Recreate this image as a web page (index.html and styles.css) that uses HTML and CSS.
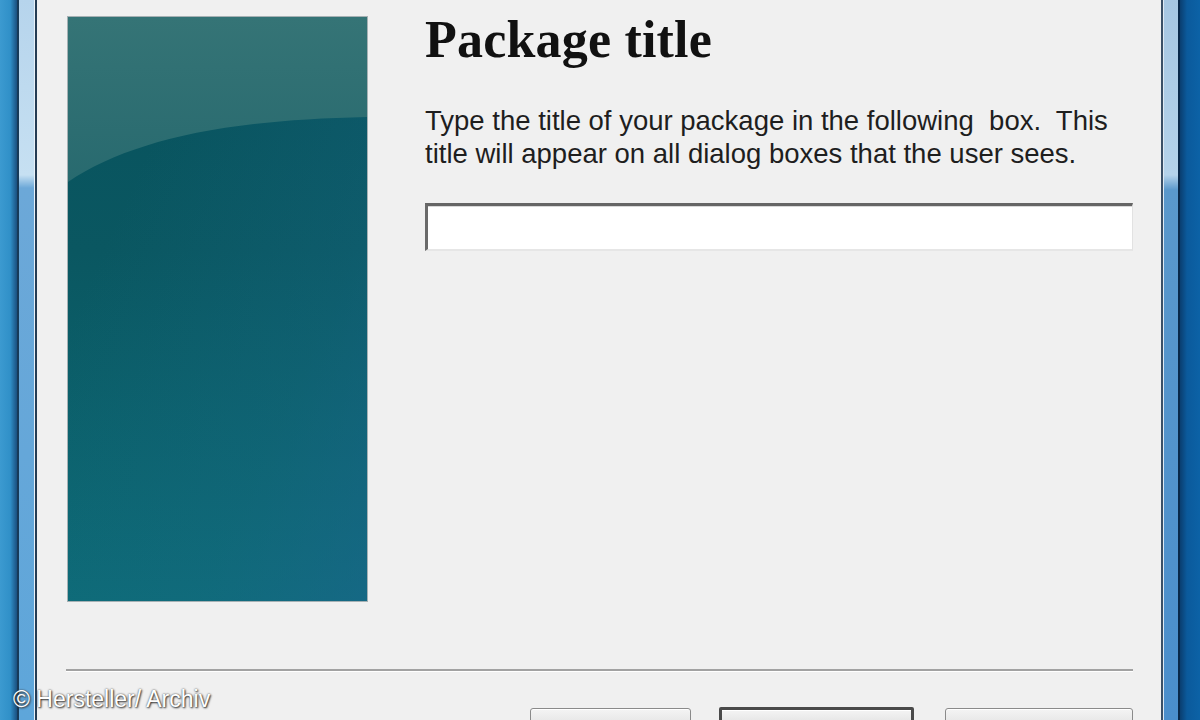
FILE: index.html
```html
<!DOCTYPE html>
<html lang="en">
<head>
<meta charset="utf-8">
<title>Package title</title>
<link rel="stylesheet" href="styles.css">
</head>
<body>
<div class="screen">
  <div class="frame-left">
    <div class="glass-outer-left"></div>
    <div class="glass-strip-left"></div>
  </div>
  <div class="dialog">
    <div class="main">
      <div class="banner">
        <svg class="banner-art" viewBox="0 0 299 584" preserveAspectRatio="none" aria-hidden="true">
          <defs>
            <linearGradient id="dark" x1="0" y1="0" x2="0" y2="1">
              <stop offset="0" stop-color="#08525d"/>
              <stop offset="0.4" stop-color="#0a5761"/>
              <stop offset="1" stop-color="#0d6b76"/>
            </linearGradient>
            <linearGradient id="blue" x1="0.2" y1="0.3" x2="1" y2="1">
              <stop offset="0" stop-color="#1a6a8c" stop-opacity="0"/>
              <stop offset="0.6" stop-color="#1a6a8c" stop-opacity="0.25"/>
              <stop offset="1" stop-color="#1c6690" stop-opacity="0.55"/>
            </linearGradient>
            <linearGradient id="light" x1="0" y1="0" x2="0" y2="1">
              <stop offset="0" stop-color="#357476"/>
              <stop offset="1" stop-color="#286a6f"/>
            </linearGradient>
          </defs>
          <rect width="299" height="584" fill="url(#dark)"/>
          <rect width="299" height="584" fill="url(#blue)"/>
          <path d="M0,0 H299 V100 C150,103 60,125 0,165 Z" fill="url(#light)"/>
        </svg>
      </div>
      <div class="content">
        <h1 class="title">Package title</h1>
        <p class="desc">Type the title of your package in the following&nbsp; box.&nbsp; This<br>title will appear on all dialog boxes that the user sees.</p>
        <div class="field"></div>
      </div>
    </div>
    <div class="sep"></div>
    <div class="buttons">
      <div class="btn btn-back"></div>
      <div class="btn btn-next"></div>
      <div class="btn btn-cancel"></div>
    </div>
  </div>
  <div class="frame-right">
    <div class="glass-strip-right"></div>
    <div class="glass-outer-right"></div>
  </div>
  <div class="watermark">© Hersteller/ Archiv</div>
</div>
</body>
</html>
```
FILE: styles.css
```css
html, body {
  margin: 0;
  padding: 0;
}
body {
  width: 1200px;
  height: 720px;
  overflow: hidden;
  background: #f0f0f0;
  font-family: "Liberation Sans", Arial, sans-serif;
}
.screen {
  position: relative;
  display: flex;
  width: 1200px;
  height: 720px;
  overflow: hidden;
}

/* window frame */
.frame-left {
  display: flex;
  width: 38px;
  flex: none;
}
.glass-outer-left {
  width: 17px;
  background: linear-gradient(90deg, #3c9ad0 0, #3090c8 60%, #1a5080 100%);
  border-right: 2px solid #173a58;
}
.glass-strip-left {
  width: 16px;
  background: linear-gradient(180deg, #b6d4ec 0, #c6e0f2 175px, #6ca8d8 188px, #5ea6da 100%);
  border-right: 2px solid #243c54;
  box-shadow: inset -1px 0 0 #e8f2fa;
}
.frame-right {
  display: flex;
  width: 39px;
  flex: none;
}
.glass-strip-right {
  width: 15px;
  border-left: 2px solid #3a5068;
  background: linear-gradient(180deg, #a6c6e2 0, #b4d2ea 175px, #5a98cc 190px, #4a8ecc 100%);
  box-shadow: inset 1px 0 0 #dfeaf4;
}
.glass-outer-right {
  width: 20px;
  border-left: 2px solid #08284a;
  background: linear-gradient(90deg, #0a3e70 0, #0b5a9c 35%, #0c62a6 100%);
}

/* dialog */
.dialog {
  flex: 1;
  background: #f0f0f0;
  padding: 17px 28px 0 30px;
  display: flex;
  flex-direction: column;
}
.main {
  display: flex;
  gap: 58px;
  height: 584px;
}
.banner {
  width: 299px;
  height: 584px;
  flex: none;
  box-shadow: 0 0 0 1px rgba(30, 60, 70, 0.35);
}
.banner-art {
  display: block;
  width: 100%;
  height: 100%;
}
.content {
  width: 708px;
}
.title {
  margin: -3px 0 0;
  font-family: "Liberation Serif", "Times New Roman", serif;
  font-weight: bold;
  font-size: 52px;
  line-height: 52px;
  letter-spacing: 0.2px;
  color: #111;
}
.desc {
  margin: 38px 0 0;
  font-size: 27.5px;
  line-height: 33px;
  color: #1e1e1e;
  white-space: nowrap;
}
.field {
  margin-top: 33px;
  height: 43px;
  background: #fff;
  border-top: 3px solid #656565;
  border-left: 3px solid #6a6a6a;
  border-right: 1px solid #e2e2e2;
  border-bottom: 2px solid #e6e6e6;
  box-shadow: inset 0 1px 0 #d8d8d8;
}
.sep {
  margin: 68px 0 0 -2px;
  height: 0;
  border-top: 2px solid #a2a2a2;
  border-bottom: 1px solid #ffffff;
}
.buttons {
  display: flex;
  justify-content: flex-end;
  margin-top: 35px;
}
.btn {
  height: 26px;
  border: 1px solid #8a8a8a;
  border-radius: 3px;
  background: linear-gradient(180deg, #f4f4f4 0, #e8e8e8 50%, #dcdcdc 100%);
  box-shadow: inset 0 1px 0 #ffffff;
  box-sizing: border-box;
}
.btn-back {
  width: 161px;
  margin-right: 28px;
  margin-top: 1px;
}
.btn-next {
  width: 195px;
  margin-right: 31px;
  border: 3px solid #4a4a4a;
  border-radius: 2px;
}
.btn-cancel {
  width: 188px;
  margin-top: 1px;
}

.watermark {
  position: absolute;
  left: 13px;
  top: 688px;
  font-size: 23px;
  line-height: 22px;
  color: #ffffff;
  text-shadow: 1px 1px 2px #333, 0 0 2px #444;
  white-space: nowrap;
}
```
